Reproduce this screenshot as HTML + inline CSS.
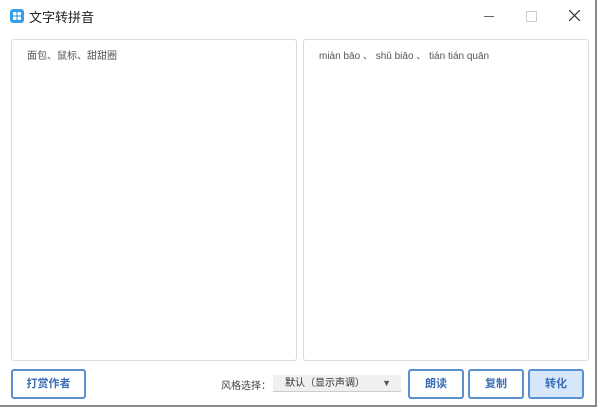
<!DOCTYPE html><html><head><meta charset="utf-8"><style>
body{margin:0;width:600px;height:411px;overflow:hidden;background:#fff;font-family:"Liberation Sans","Noto Sans CJK SC",sans-serif;position:relative}
.win{position:absolute;left:0;top:0;width:597px;height:407px;border-right:2px solid #8a8a8a;border-bottom:2px solid #8a8a8a;box-sizing:border-box;background:#fff}
.ta{position:absolute;top:39px;height:322px;border:1px solid #dcdcdc;border-radius:3px;box-sizing:border-box;font-size:10px;color:#555;padding:7px 0 0 15px}
.btn{position:absolute;top:369px;height:30px;border:2px solid #5b8fd0;border-radius:3px;box-sizing:border-box;font-size:11px;font-weight:bold;color:#3a6db5;text-align:center;line-height:26px}
</style></head><body><div class="win">
<div style="position:absolute;left:10px;top:9px;width:14px;height:14px;background:#3a9ee8;border-radius:3px"><svg width="14" height="14"><g fill="#fff"><rect x="3" y="3" width="3.5" height="3.5" rx="1"/><rect x="7.5" y="3" width="3.5" height="3.5" rx="1"/><rect x="3" y="7.5" width="3.5" height="3.5" rx="1"/><rect x="7.5" y="7.5" width="3.5" height="3.5" rx="1"/></g></svg></div>
<div style="position:absolute;left:29px;top:7px;font-size:13px;color:#222">文字转拼音</div>
<div style="position:absolute;left:484px;top:16px;width:10px;height:1px;background:#666"></div>
<div style="position:absolute;left:526px;top:11px;width:9px;height:9px;border:1px solid #ccc"></div>
<svg style="position:absolute;left:569px;top:10px" width="11" height="11"><path d="M0 0L11 11M11 0L0 11" stroke="#333" stroke-width="1.2"/></svg>
<div class="ta" style="left:11px;width:286px">面包、鼠标、甜甜圈</div>
<div class="ta" style="left:303px;width:286px">miàn bāo 、 shǔ biāo 、 tián tián quān</div>
<div class="btn" style="left:11px;width:75px">打赏作者</div>
<div style="position:absolute;left:221px;top:377px;font-size:10px;color:#444">风格选择：</div>
<div style="position:absolute;left:273px;top:375px;width:128px;height:17px;background:#f0f0f0;border-bottom:1px solid #ccc;font-size:10px;color:#333;line-height:17px;padding-left:12px;box-sizing:border-box">默认（显示声调）<span style="position:absolute;right:10px;font-size:9px;color:#555">▼</span></div>
<div class="btn" style="left:408px;width:56px">朗读</div>
<div class="btn" style="left:468px;width:56px">复制</div>
<div class="btn" style="left:528px;width:56px;background:#d6e6fb">转化</div>
</div></body></html>
